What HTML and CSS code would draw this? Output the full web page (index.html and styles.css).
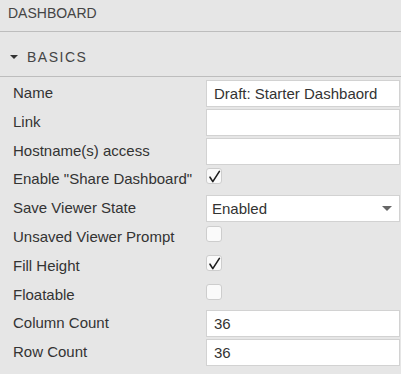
FILE: index.html
```html
<!DOCTYPE html>
<html lang="en">
<head>
    <meta charset="UTF-8">
    <title>Dashboard</title>
    <link rel="stylesheet" href="styles.css">
</head>
<body>

<div class="panel">
    <div class="panel-title">DASHBOARD</div>
    <div class="section-head"><span class="caret"></span>BASICS</div>
    <ul class="props">
        <li><label>Name</label><input class="text" type="text" value="Draft: Starter Dashbaord"></li>
        <li><label>Link</label><input class="text" type="text" value=""></li>
        <li><label>Hostname(s) access</label><input class="text" type="text" value=""></li>
        <li><label>Enable "Share Dashboard"</label>
            <span class="check">
                <svg width="15" height="15" viewBox="0 0 15 15"><path d="M3 8.2 L5.8 12.6 L12.4 2.4" fill="none" stroke="#1f1f1f" stroke-width="1.6" stroke-linecap="round" stroke-linejoin="round"/></svg>
            </span>
        </li>
        <li><label>Save Viewer State</label>
            <div class="select"><span>Enabled</span><span class="arrow"></span></div>
        </li>
        <li><label>Unsaved Viewer Prompt</label><span class="check"></span></li>
        <li><label>Fill Height</label>
            <span class="check">
                <svg width="15" height="15" viewBox="0 0 15 15"><path d="M3 8.2 L5.8 12.6 L12.4 2.4" fill="none" stroke="#1f1f1f" stroke-width="1.6" stroke-linecap="round" stroke-linejoin="round"/></svg>
            </span>
        </li>
        <li><label>Floatable</label><span class="check"></span></li>
        <li><label>Column Count</label><input class="text" type="text" value="36"></li>
        <li><label>Row Count</label><input class="text" type="text" value="36"></li>
    </ul>
</div>

</body>
</html>
```

FILE: styles.css
```css
/*reset*/
*{margin: 0;padding: 0;list-style: none;box-sizing: border-box;}
body{background: #e6e6e6;font-family: "Liberation Sans", Arial, sans-serif;font-size: 15px;color: #333;}

/*panel header and section head*/
.panel{width: 401px;}
.panel-title{height: 32px;line-height: 26px;padding-left: 8px;font-size: 14px;color: #444;border-bottom: 1px solid #bdbdbd;}
.section-head{height: 45px;padding: 12px 0 0 10px;line-height: 26px;font-size: 14px;letter-spacing: 1.5px;color: #444;border-bottom: 1px solid #bdbdbd;display: flex;align-items: flex-start;}
.caret{width: 0;height: 0;margin: 11px 9px 0 0;border-left: 4px solid transparent;border-right: 4px solid transparent;border-top: 4px solid #333;}

/*property rows*/
.props{padding-top: 2px;}
.props li{display: grid;grid-template-columns: 206px 194px;height: 28.8px;align-items: start;}
.props label{padding-left: 13px;line-height: 28.8px;color: #333;white-space: nowrap;}
.text{margin-top: 1px;height: 27px;width: 194px;border: 1px solid #d2d2d2;background: #fff;padding: 0 7px;font-family: inherit;font-size: 15px;color: #333;outline: none;}
.check{margin-top: 3px;width: 16px;height: 16px;border: 1px solid #cdcdcd;border-radius: 3px;background: #fafafa;display: block;}
.check svg{display: block;}
.select{margin-top: 1px;height: 27px;border: 1px solid #d2d2d2;background: #fff;padding: 0 7px 0 5px;display: flex;align-items: center;justify-content: space-between;color: #333;}
.arrow{width: 0;height: 0;border-left: 5px solid transparent;border-right: 5px solid transparent;border-top: 5px solid #666;}
```
